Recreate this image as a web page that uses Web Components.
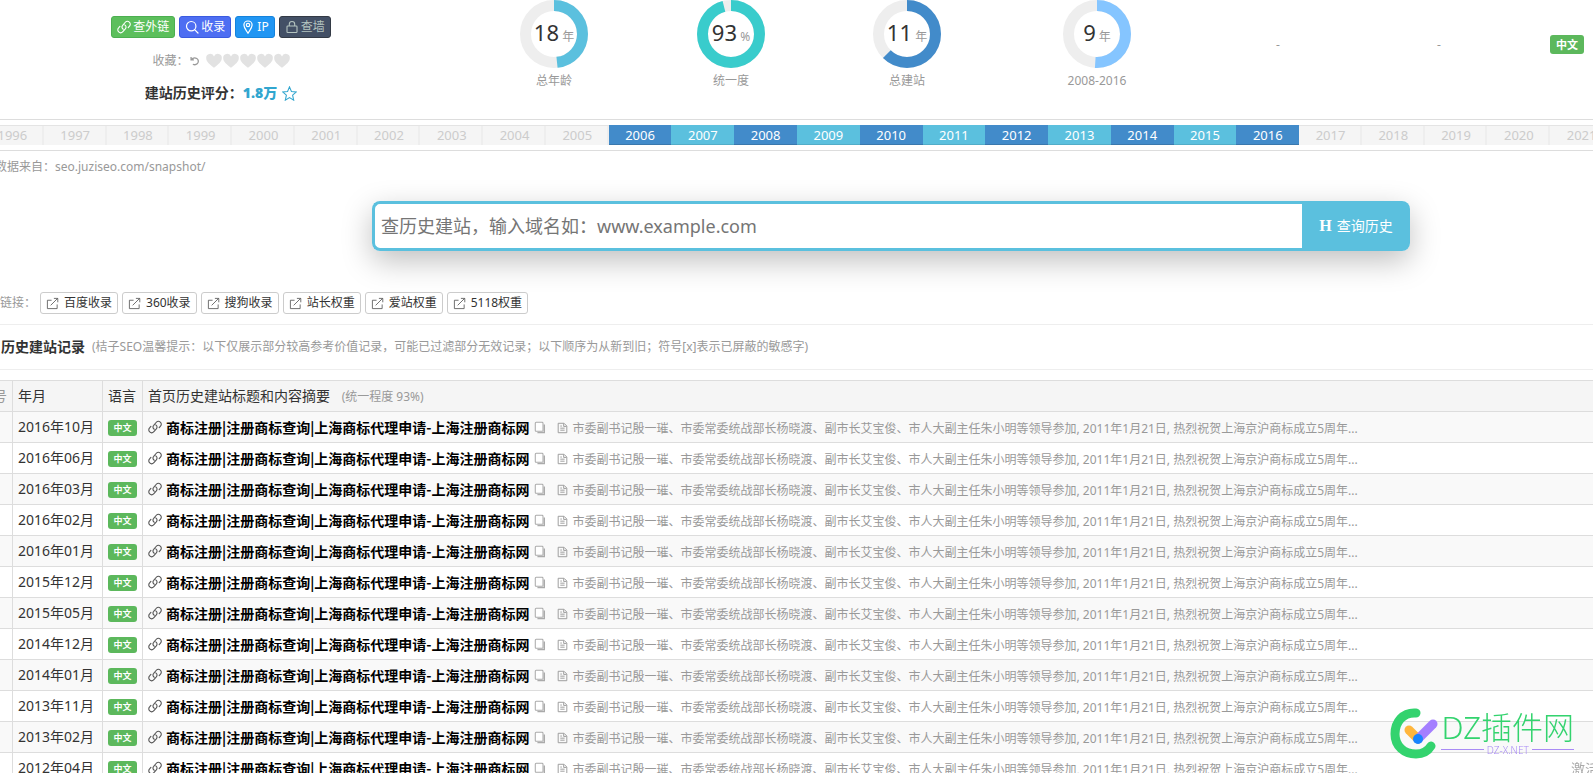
<!DOCTYPE html>
<html lang="zh-CN">
<head>
<meta charset="utf-8">
<title>历史建站记录</title>
<style>
  body {
    margin: 0; height: 100vh; overflow: hidden; background: #fff; color: #333;
    font: 12px/20px "Noto Sans", "Noto Sans CJK SC", sans-serif;
  }
</style>
</head>
<body>
<site-page></site-page>
<script>
const icons = {
  link: '<g fill="none" stroke="currentColor" stroke-width="1.1" stroke-linecap="round"><path d="M6.2 9.3c-1.5-1-1.6-2.800-.5-4l2.400-2.800c1.200-1.300 3-1.400 4.200-.4s1.300 2.900.2 4.100l-1.300 1.500"/><path d="M7.800 4.900c1.500 1 1.600 2.700.5 4l-2.400 2.700c-1.200 1.300-3 1.400-4.200.3s-1.200-2.800-.1-4l1.300-1.500"/></g>',
  search: '<g fill="none" stroke="currentColor" stroke-width="1.2" stroke-linecap="round"><circle cx="6.200" cy="6.200" r="4.700"/><path d="m9.600 9.600 3.400 3.400"/></g>',
  pin: '<g fill="none" stroke="currentColor" stroke-width="1.200"><path d="M7 13.200C5.500 10.500 2.900 8 2.900 5.100a4.100 4.100 0 0 1 8.200 0c0 2.900-2.600 5.400-4.100 8.100z"/><circle cx="7" cy="5" r="1.700"/></g>',
  lock: '<g fill="none" stroke="currentColor" stroke-width="1.100"><rect x="2" y="6" width="10" height="6.500" rx=".8"/><path d="M4.300 6V4.200a2.700 2.700 0 0 1 5.400 0V6"/></g>',
  undo: '<path d="M1.500 1.500v4h4M2 5c2-2.500 5-3 7.500-1.500s3 5 .5 7.500c-1.500 1.300-4 1.500-6 .5" fill="none" stroke="currentColor" stroke-width="1.800"/>',
  heart: '<path d="M7 13C3 9.800.2 7.500.2 4.600A3.500 3.500 0 0 1 7 3.100a3.500 3.500 0 0 1 6.800 1.500C13.800 7.500 11 9.800 7 13z" fill="currentColor"/>',
  star: '<path d="m7 .8 1.800 4.300 4.600.4-3.500 3.100 1 4.600L7 10.800l-3.900 2.400 1-4.600L.6 5.500l4.600-.4z" fill="none" stroke="currentColor"/>',
  out: '<g fill="none" stroke="currentColor" stroke-width=".9"><path d="M6 3.500H1.500v9h10.500V8"/><path d="m5 9 7.500-7.500M8.500 1.500h4.200v4.200"/></g>',
  copy: '<path d="M12 3.500v9.500H4" fill="none" stroke="currentColor" stroke-width="1.700"/><rect x="1.500" y="1" width="9" height="10.500" rx="1" fill="#fff" stroke="currentColor" stroke-width="1.200"/>',
  doc: '<g fill="none" stroke="currentColor" stroke-width="1.200"><path d="M1.500 1h7.500L12.500 4.500v8.500h-11z"/><path d="M8.500 1.500V5H12M4.200 7.200h5.500M4.200 9.800h5.500M4.200 4.500h2"/></g>'
};

function define(name, css, html) {
  customElements.define(name, class extends HTMLElement {
    constructor() {
      super();
      const root = this.attachShadow({ mode: 'open' });
      root.innerHTML = `<style>${css}</style>` + (typeof html === 'function' ? html(this) : html);
    }
  });
}

define('ui-icon', `
  :host { display: inline-block; width: 14px; height: 14px; flex: none; }
  svg { display: block; width: 100%; height: 100%; }`,
  el => `<svg viewBox="0 0 14 14" aria-hidden="true">${icons[el.getAttribute('name')]}</svg>`);

define('lang-badge', `
  :host { display: inline-block; background: #5cb85c; color: #fff; border-radius: 3px; font-weight: 700;
    font-size: var(--badge-size, 9px); line-height: var(--badge-line, 16px); padding: 0 var(--badge-pad, 5px); }`,
  '<slot></slot>');

define('tool-button', `
  :host { display: block; }
  button { display: flex; align-items: center; gap: 2px; height: 22px; margin: 0; padding: 0 5px;
    border: 1px solid var(--edge); border-radius: 3px; background: var(--fill); color: var(--ink, #fff);
    font: inherit; line-height: 20px; white-space: nowrap; }`,
  el => `<button type="button"><ui-icon name="${el.getAttribute('icon')}"></ui-icon><slot></slot></button>`);

define('site-score', `
  :host { display: flex; flex-direction: column; align-items: center; padding: 16px 0 0 2px; }
  div { display: flex; align-items: center; }
  .tools { gap: 4px; }
  .fav { color: #999; margin: 13px 0 12px; gap: 1px; height: 20px; }
  .fav ui-icon { color: #e2e2e2; width: 16px; height: 16px; }
  .fav .undo { color: #999; width: 10px; height: 10px; margin: 0 5px 0 0; }
  .score { font-size: 14px; font-weight: 700; gap: 5px; }
  .score b, .score ui-icon { color: #31a6cf; }
  .score ui-icon { width: 15px; height: 15px; }
  .g { --fill: #5cbf5c; --edge: #4caf50; } .b { --fill: #4e6ef2; --edge: #3b5be0; }
  .s { --fill: #2196f3; --edge: #1583dc; } .d { --fill: #435066; --edge: #333a45; --ink: #b4c4c0; }`, `
  <div class="tools">
    <tool-button class="g" icon="link">查外链</tool-button><tool-button class="b" icon="search">收录</tool-button>
    <tool-button class="s" icon="pin">IP</tool-button><tool-button class="d" icon="lock">查墙</tool-button>
  </div>
  <div class="fav"><span>收藏：</span><ui-icon class="undo" name="undo"></ui-icon>${'<ui-icon name="heart"></ui-icon>'.repeat(5)}</div>
  <div class="score"><span>建站历史评分：<b>1.8万</b></span><ui-icon name="star"></ui-icon></div>`);

define('ring-stat', `
  :host { display: flex; flex-direction: column; align-items: center; color: #999; }
  .ring { display: grid; width: 68px; height: 68px; }
  .ring > * { grid-area: 1 / 1; }
  svg { width: 68px; height: 68px; }
  p { margin: 0; place-self: center; line-height: 28px; white-space: nowrap; }
  b { font-size: 22px; font-weight: 400; color: #333; }
  span { margin-top: 3px; }`,
  el => `<div class="ring"><svg viewBox="0 0 68 68" fill="none" stroke-width="11">
    <circle cx="34" cy="34" r="28.5" stroke="#eee"/>
    <circle cx="34" cy="34" r="28.5" stroke="${el.getAttribute('color')}" pathLength="100" stroke-dasharray="${el.getAttribute('share')} 100" transform="rotate(-90 34 34)"/>
    </svg><p><b>${el.getAttribute('value')}</b> ${el.getAttribute('unit')}</p></div><span><slot></slot></span>`);

define('site-overview', `
  :host { display: grid; grid-template-columns: 492fr 176fr 178fr 174fr 206fr 156fr 166fr 90fr;
    margin: 0 -19px 0 -26px; height: 119px; }
  .dash { text-align: center; color: #999; padding-top: 35px; }
  .lang { text-align: center; padding-top: 35px; --badge-size: 11px; --badge-line: 19px; --badge-pad: 6px; }`, `
  <site-score></site-score>
  <ring-stat value="18" unit="年" share="48.3" color="#5bc0de">总年龄</ring-stat>
  <ring-stat value="93" unit="%" share="96" color="#39cccc">统一度</ring-stat>
  <ring-stat value="11" unit="年" share="62.5" color="#428bca">总建站</ring-stat>
  <ring-stat value="9" unit="年" share="51" color="#85c5ff">2008-2016</ring-stat>
  <div class="dash">-</div><div class="dash">-</div>
  <div class="lang"><lang-badge>中文</lang-badge></div>`);

define('year-bar', `
  :host { display: block; border: solid #ddd; border-width: 1px 0; padding: 5px 0; overflow: hidden; }
  ol { display: grid; grid-template-columns: repeat(26, 1fr); margin: 0 -20px 0 -19px; padding: 0; list-style: none;
    text-align: center; font-size: 13px; line-height: 20px; color: #ccc; }
  li { background: #f5f5f5; box-shadow: inset 0 1px #e4e4e4, inset -2px 0 #eee; }
  .on { color: #fff; background: #428bca; box-shadow: inset 0 -1px #3a78ad; }
  .on.odd { background: #5bc0de; box-shadow: inset 0 -1px #52adc8; }`,
  () => '<ol>' + Array.from({ length: 26 }, (_, i) => {
    const y = 1996 + i;
    return `<li class="${y > 2005 && y < 2017 ? 'on' : ''} ${y % 2 ? 'odd' : ''}">${y}</li>`;
  }).join('') + '</ol>');

define('history-search', `
  :host { display: block; margin: 24px 183px 0 372px; }
  form { display: flex; height: 50px; margin: 0; border-radius: 8px; box-shadow: 0 10px 30px rgba(0,0,0,.25); }
  input { flex: 1; min-width: 0; box-sizing: border-box; margin: 0; padding: 0 6px; border: 3px solid #5bc0de; border-right: 0;
    border-radius: 8px 0 0 8px; background: #fff; font: inherit; font-size: 18px; outline: 0; }
  input::placeholder { color: #757575; opacity: 1; }
  button { width: 108px; border: 0; border-radius: 0 8px 8px 0; background: #5bc0de; color: #fff; font: inherit; font-size: 14px; }
  b { font-family: "Liberation Serif", serif; font-size: 16px; margin-right: 5px; }`, `
  <form><input type="text" aria-label="域名" placeholder="查历史建站，输入域名如：www.example.com"><button type="button"><b>H</b>查询历史</button></form>`);

define('quick-link', `
  :host { display: block; }
  a { display: flex; align-items: center; gap: 5px; height: 20px; padding: 0 5px; border: 1px solid #ccc; border-radius: 3px;
    color: #333; text-decoration: none; }
  ui-icon { color: #555; width: 13px; height: 13px; }`,
  '<a href="#"><ui-icon name="out"></ui-icon><slot></slot></a>');

define('quick-links', `
  :host { display: flex; align-items: center; gap: 4px; padding: 41px 0 10px; border-bottom: 1px solid #eee; color: #999; }
  span { width: 36px; }`,
  '<span>链接：</span>' + ['百度收录', '360收录', '搜狗收录', '站长权重', '爱站权重', '5118权重'].map(t => `<quick-link>${t}</quick-link>`).join(''));

define('section-title', `
  :host { display: flex; align-items: center; gap: 7px; height: 44px; padding-left: 1px; border-bottom: 1px solid #eee; color: #999; }
  h2 { margin: 0; font-size: 14px; color: #333; }`,
  '<h2><slot></slot></h2><slot name="note"></slot>');

const months = ['2016年10月', '2016年06月', '2016年03月', '2016年02月', '2016年01月', '2015年12月', '2015年05月',
  '2014年12月', '2014年01月', '2013年11月', '2013年02月', '2012年04月'];

define('record-table', `
  :host { display: block; margin: 10px -18px 0 -27px; }
  table { width: 100%; border-collapse: collapse; table-layout: fixed; font-size: 14px; }
  th, td { height: 30px; padding: 0 5px; border: 1px solid #ddd; text-align: left; font-weight: 400; white-space: nowrap; }
  th { background: #f5f5f5; }
  th:first-child { text-align: right; color: #999; }
  tbody tr:nth-child(odd) { background: #f9f9f9; }
  .no { width: 28px; } .date { width: 79px; } .lang { width: 29px; }
  small { font-size: 12px; color: #999; margin-left: 8px; }
  lang-badge { display: block; margin-top: 2px; text-align: center; --badge-pad: 0; }
  .entry { display: flex; align-items: center; }
  .entry ui-icon { color: #555; }
  a { margin: 0 5px 0 4px; color: #000; font-family: "Noto Sans CJK SC", sans-serif; font-weight: 700; text-decoration: none; }
  .entry .copy { color: #aaa; width: 12px; height: 13px; }
  .entry .doc { color: #999; width: 11px; height: 12px; margin: 2px 4px 0 11px; }
  p { margin: 3px 0 0; font-size: 12px; color: #999; }`, `
  <table><thead><tr><th class="no">序号</th><th class="date">年月</th><th class="lang">语言</th><th>首页历史建站标题和内容摘要 <small>(统一程度 93%)</small></th></tr></thead>
  <tbody>${months.map(m => `<tr><td></td><td>${m}</td><td><lang-badge>中文</lang-badge></td><td><div class="entry"><ui-icon name="link"></ui-icon>
    <a href="#">商标注册|注册商标查询|上海商标代理申请-上海注册商标网</a><ui-icon class="copy" name="copy"></ui-icon><ui-icon class="doc" name="doc"></ui-icon>
    <p>市委副书记殷一璀、市委常委统战部长杨晓渡、副市长艾宝俊、市人大副主任朱小明等领导参加, 2011年1月21日, 热烈祝贺上海京沪商标成立5周年...</p></div></td></tr>`).join('')}</tbody></table>`);

define('site-mark', `
  :host { position: fixed; right: 19px; bottom: 14px; display: flex; align-items: center; gap: 3px; color: #33d36e; }
  svg { width: 48px; height: 51px; }
  .name { padding-bottom: 4px; }
  strong { display: block; font-size: 31px; line-height: 36px; font-weight: 300; white-space: nowrap; }
  .host { display: flex; align-items: center; gap: 3px; font-size: 10px; line-height: 10px; color: #a98bf5; font-weight: 300; }
  i { flex: 1; height: 1px; background: #a98bf5; }`, `
  <svg viewBox="0 0 48 51" fill="none" stroke-width="9" stroke-linecap="round">
    <path d="M26 5C13 4 5 14 5 26c0 12 9 20 21 20 7 0 12-3 15-8" stroke="#33d36e"/>
    <path d="m19 22 9 9" stroke="#ffb63d"/><path d="M43 16 28 31" stroke="#a47fff"/><circle cx="28" cy="31" r="5" fill="#1885ff"/>
  </svg><div class="name"><strong>DZ插件网</strong><div class="host"><i></i>DZ-X.NET<i></i></div></div>`);

define('corner-note', `
  :host { position: fixed; left: calc(100% - 22px); bottom: -6px; font-size: 14px; color: #aaa; white-space: nowrap; }`,
  '<slot></slot>');

define('site-page', `
  :host { display: block; overflow: hidden; }
  .source { margin: 6px 0 0 -5px; color: #999; }`, `
  <site-overview></site-overview>
  <year-bar></year-bar>
  <p class="source">数据来自：seo.juziseo.com/snapshot/</p>
  <history-search></history-search>
  <quick-links></quick-links>
  <section-title>历史建站记录<span slot="note">(桔子SEO温馨提示：以下仅展示部分较高参考价值记录，可能已过滤部分无效记录；以下顺序为从新到旧；符号[x]表示已屏蔽的敏感字)</span></section-title>
  <record-table></record-table>
  <corner-note>激活</corner-note>
  <site-mark></site-mark>`);
</script>
</body>
</html>
